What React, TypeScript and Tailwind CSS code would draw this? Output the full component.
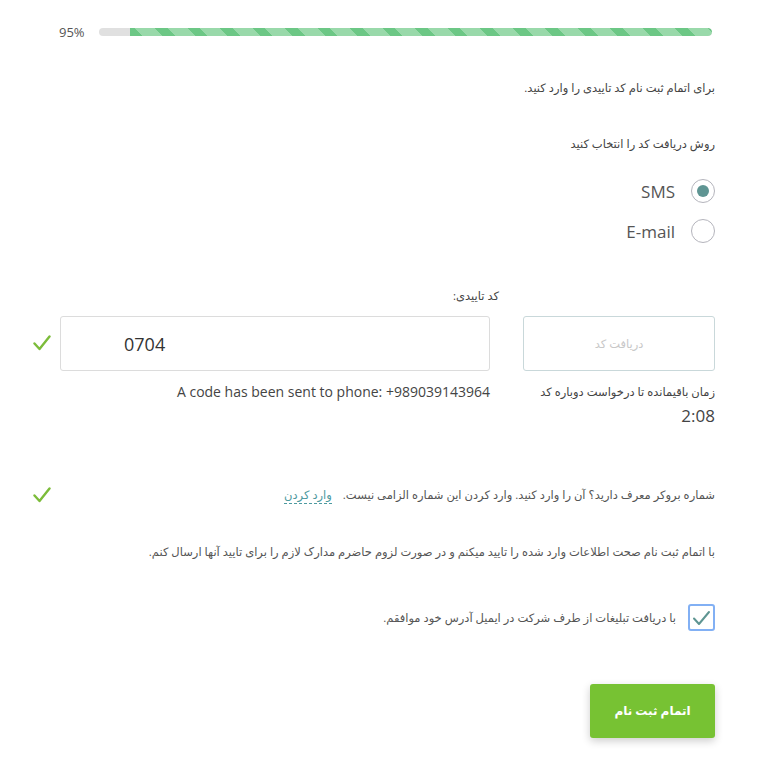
import { useState } from "react";

function Check({ className = "" }: { className?: string }) {
  return (
    <svg width="18" height="16" viewBox="0 0 18 16" className={className}>
      <path d="M1.5 8.5 L6.5 14 L16.5 1.5" fill="none" stroke="#7cbc3a" strokeWidth="2.4" strokeLinecap="round" strokeLinejoin="round" />
    </svg>
  );
}

export default function App() {
  const [method, setMethod] = useState<"sms" | "email">("sms");
  const [code, setCode] = useState("0704");
  const [ads, setAds] = useState(true);

  return (
    <div className="w-[783px] min-h-[763px] bg-white text-[#555] font-['Open_Sans','DejaVu_Sans',sans-serif]">
      {/* progress */}
      <div className="flex items-center pl-[59px] pr-[71px] pt-[23px] h-[41px]">
        <span className="text-[13px] text-[#555] w-[40px] leading-none">95%</span>
        <div className="flex-1 h-[8px] rounded-full bg-[#e0e0e0] overflow-hidden flex justify-end">
          <div className="w-[95%] h-full rounded-r-full bg-[repeating-linear-gradient(45deg,#6cc785_0px,#6cc785_9px,#99d9aa_9px,#99d9aa_23px)]" />
        </div>
      </div>

      <div className="pl-[60px] pr-[68px]" dir="rtl">
        <p className="mt-[38px] text-[11.5px] leading-[18px] text-[#444]">برای اتمام ثبت نام کد تاییدی را وارد کنید.</p>
        <p className="mt-[38px] text-[11.5px] leading-[18px] text-[#444]">روش دریافت کد را انتخاب کنید</p>

        {/* method */}
        <div className="mt-[26px] flex flex-col gap-[16px]">
          {([
            ["sms", "SMS"],
            ["email", "E-mail"],
          ] as const).map(([k, label]) => (
            <label key={k} className="flex items-center gap-[16px] cursor-pointer h-[24px]">
              <span
                onClick={() => setMethod(k)}
                className="w-[24px] h-[24px] rounded-full border border-[#b4b4bc] flex items-center justify-center bg-white"
              >
                {method === k && <span className="w-[12px] h-[12px] rounded-full bg-[#5f9593]" />}
              </span>
              <span className="text-[17px] text-[#555] leading-none" dir="ltr">{label}</span>
            </label>
          ))}
        </div>

        <p className="mt-[44px] text-[11.5px] leading-[18px] text-[#444] pr-[216px]">کد تاییدی:</p>
      </div>

      {/* code row */}
      <div className="flex items-start pl-[33px] pr-[68px] mt-[11px]">
        <div className="w-[27px] h-[54px] flex items-center">
          <Check />
        </div>
        <div className="w-[430px]">
          <input
            value={code}
            onChange={(e) => setCode(e.target.value)}
            className="w-full h-[55px] rounded-[3px] border border-[#dcdcdc] pl-[63px] text-[18px] text-[#333] outline-none font-['Open_Sans',sans-serif]"
          />
          <p className="text-right text-[14px] leading-[20px] text-[#444] mt-[11px]">A code has been sent to phone: +989039143964</p>
        </div>
        <div className="ml-auto w-[192px]" dir="rtl">
          <button className="w-full h-[55px] rounded-[3px] border border-[#c9d8da] bg-white text-[11.5px] text-[#c8c8c8]">دریافت کد</button>
          <p className="text-[11.5px] leading-[18px] text-[#444] mt-[12px] whitespace-nowrap">زمان باقیمانده تا درخواست دوباره کد</p>
          <p className="text-[17px] leading-[24px] text-[#444] mt-[3px]">2:08</p>
        </div>
      </div>

      {/* referral */}
      <div className="flex items-center pl-[33px] pr-[68px] mt-[57px] h-[20px]">
        <Check />
        <p dir="rtl" className="ml-auto text-[11.5px] leading-[18px] text-[#555]">
          شماره بروکر معرف دارید؟ آن را وارد کنید. وارد کردن این شماره الزامی نیست.{" "}
          <a className="mr-[8px] text-[#4d9aa0] border-b border-dashed border-[#4d9aa0] pb-[1px] cursor-pointer">وارد کردن</a>
        </p>
      </div>

      <p dir="rtl" className="pl-[60px] pr-[68px] mt-[38px] text-[11.5px] leading-[18px] text-[#555]">
        با اتمام ثبت نام صحت اطلاعات وارد شده را تایید میکنم و در صورت لزوم حاضرم مدارک لازم را برای تایید آنها ارسال کنم.
      </p>

      {/* ads checkbox */}
      <div dir="rtl" className="flex items-center gap-[12px] pr-[68px] mt-[43px]">
        <span
          onClick={() => setAds(!ads)}
          className="w-[27px] h-[27px] rounded-[3px] border-2 border-[#82b0f4] flex items-center justify-center cursor-pointer"
        >
          {ads && (
            <svg width="19" height="16" viewBox="0 0 19 16">
              <path d="M2 8.5 L7 14 L17 2" fill="none" stroke="#5e9592" strokeWidth="2" strokeLinecap="round" strokeLinejoin="round" />
            </svg>
          )}
        </span>
        <span className="text-[11.5px] leading-[18px] text-[#555]">با دریافت تبلیغات از طرف شرکت در ایمیل آدرس خود موافقم.</span>
      </div>

      <div dir="rtl" className="pr-[68px] mt-[53px] pb-[25px]">
        <button className="w-[125px] h-[54px] rounded-[3px] bg-[#77c233] text-white text-[12px] font-bold shadow-[0_3px_8px_rgba(0,0,0,0.2)]">
          اتمام ثبت نام
        </button>
      </div>
    </div>
  );
}
